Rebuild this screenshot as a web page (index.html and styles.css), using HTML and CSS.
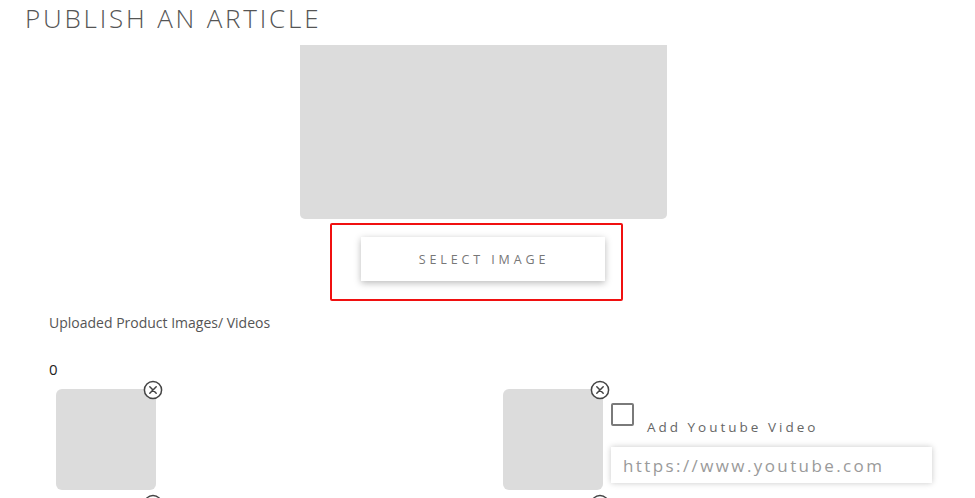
FILE: index.html
```html
<!DOCTYPE html>
<html lang="en">
<head>
<meta charset="utf-8">
<title>Publish an Article</title>
<link rel="stylesheet" href="styles.css">
</head>
<body>
<h1 class="title">PUBLISH AN ARTICLE</h1>
<section class="upload">
  <div class="preview"></div>
  <div class="highlight">
    <button class="select-btn" type="button">SELECT IMAGE</button>
  </div>
</section>
<section class="gallery">
  <p class="gallery-label">Uploaded Product Images/ Videos</p>
  <p class="count">0</p>
  <div class="grid">
    <div class="cell">
      <div class="thumb">
        <span class="close"><svg viewBox="0 0 20 20" width="20" height="20"><circle cx="10" cy="10" r="8.6" fill="#fff" stroke="#444" stroke-width="1.5"/><path d="M6.8 6.8 L13.2 13.2 M13.2 6.8 L6.8 13.2" stroke="#444" stroke-width="1.5" stroke-linecap="round"/></svg></span>
      </div>
    </div>
    <div class="cell">
      <div class="thumb">
        <span class="close"><svg viewBox="0 0 20 20" width="20" height="20"><circle cx="10" cy="10" r="8.6" fill="#fff" stroke="#444" stroke-width="1.5"/><path d="M6.8 6.8 L13.2 13.2 M13.2 6.8 L6.8 13.2" stroke="#444" stroke-width="1.5" stroke-linecap="round"/></svg></span>
      </div>
      <div class="youtube">
        <div class="yt-row">
          <span class="checkbox"></span>
          <span class="yt-label">Add Youtube Video</span>
        </div>
        <input class="yt-input" type="text" placeholder="https://www.youtube.com">
      </div>
    </div>
    <div class="cell">
      <div class="thumb">
        <span class="close"><svg viewBox="0 0 20 20" width="20" height="20"><circle cx="10" cy="10" r="8.6" fill="#fff" stroke="#444" stroke-width="1.5"/><path d="M6.8 6.8 L13.2 13.2 M13.2 6.8 L6.8 13.2" stroke="#444" stroke-width="1.5" stroke-linecap="round"/></svg></span>
      </div>
    </div>
    <div class="cell">
      <div class="thumb">
        <span class="close"><svg viewBox="0 0 20 20" width="20" height="20"><circle cx="10" cy="10" r="8.6" fill="#fff" stroke="#444" stroke-width="1.5"/><path d="M6.8 6.8 L13.2 13.2 M13.2 6.8 L6.8 13.2" stroke="#444" stroke-width="1.5" stroke-linecap="round"/></svg></span>
      </div>
    </div>
  </div>
</section>
</body>
</html>
```

FILE: styles.css
```css
* { box-sizing: border-box; }
html, body { margin: 0; padding: 0; background: #fff; }
body {
  font-family: "Open Sans", "Liberation Sans", sans-serif;
  color: #555;
  overflow: hidden;
  height: 498px;
}
.title {
  margin: 0;
  padding: 3px 0 0 25px;
  font-size: 26px;
  line-height: 31px;
  font-weight: 300;
  letter-spacing: 2.8px;
  color: #555;
}
.upload {
  display: flex;
  flex-direction: column;
  align-items: center;
  padding-right: 8px;
}
.preview {
  margin-top: 11px;
  width: 367px;
  height: 174px;
  background: #dcdcdc;
  border-radius: 0 0 5px 5px;
}
.highlight {
  margin-top: 4px;
  margin-right: 14px;
  border: 2px solid #f01010;
  border-radius: 2px;
  padding: 12px 16px 18px 29px;
}
.select-btn {
  display: block;
  width: 244px;
  height: 44px;
  border: 0;
  background: #fff;
  box-shadow: 0 2px 7px rgba(0,0,0,0.28);
  font-family: "Open Sans", "Liberation Sans", sans-serif;
  font-size: 12.5px;
  letter-spacing: 3.9px;
  color: #777;
  padding: 0 0 0 2px;
}
.gallery { padding-left: 49px; }
.gallery-label {
  margin: 13px 0 0;
  font-size: 14px;
  line-height: 18px;
  color: #555;
}
.count {
  margin: 27px 0 0;
  font-size: 15px;
  line-height: 20px;
  color: #222;
}
.grid {
  margin-top: 10px;
  padding-left: 7px;
  display: grid;
  grid-template-columns: 447px 447px;
  row-gap: 13px;
}
.cell { display: flex; align-items: flex-start; }
.thumb {
  position: relative;
  width: 100px;
  height: 101px;
  flex: none;
  background: #dcdcdc;
  border-radius: 6px;
}
.close {
  position: absolute;
  top: -9px;
  right: -7px;
  width: 20px;
  height: 20px;
  display: block;
}
.close svg { display: block; }
.youtube {
  margin-left: 8px;
  margin-top: 14px;
  display: flex;
  flex-direction: column;
}
.yt-row { display: flex; align-items: flex-start; }
.checkbox {
  width: 23px;
  height: 23px;
  border: 2px solid #7a7a7a;
  border-radius: 2px;
  flex: none;
}
.yt-label {
  margin: 15px 0 0 13px;
  font-size: 13.5px;
  line-height: 18px;
  letter-spacing: 3px;
  color: #666;
}
.yt-input {
  margin-top: 11px;
  width: 321px;
  height: 36px;
  border: 0;
  outline: none;
  background: #fff;
  box-shadow: 0 0 6px rgba(0,0,0,0.22);
  padding: 0 12px;
  font-family: "Open Sans", "Liberation Sans", sans-serif;
  font-size: 17px;
  letter-spacing: 2.4px;
  color: #999;
}
.yt-input::placeholder { color: #9a9a9a; }
```
